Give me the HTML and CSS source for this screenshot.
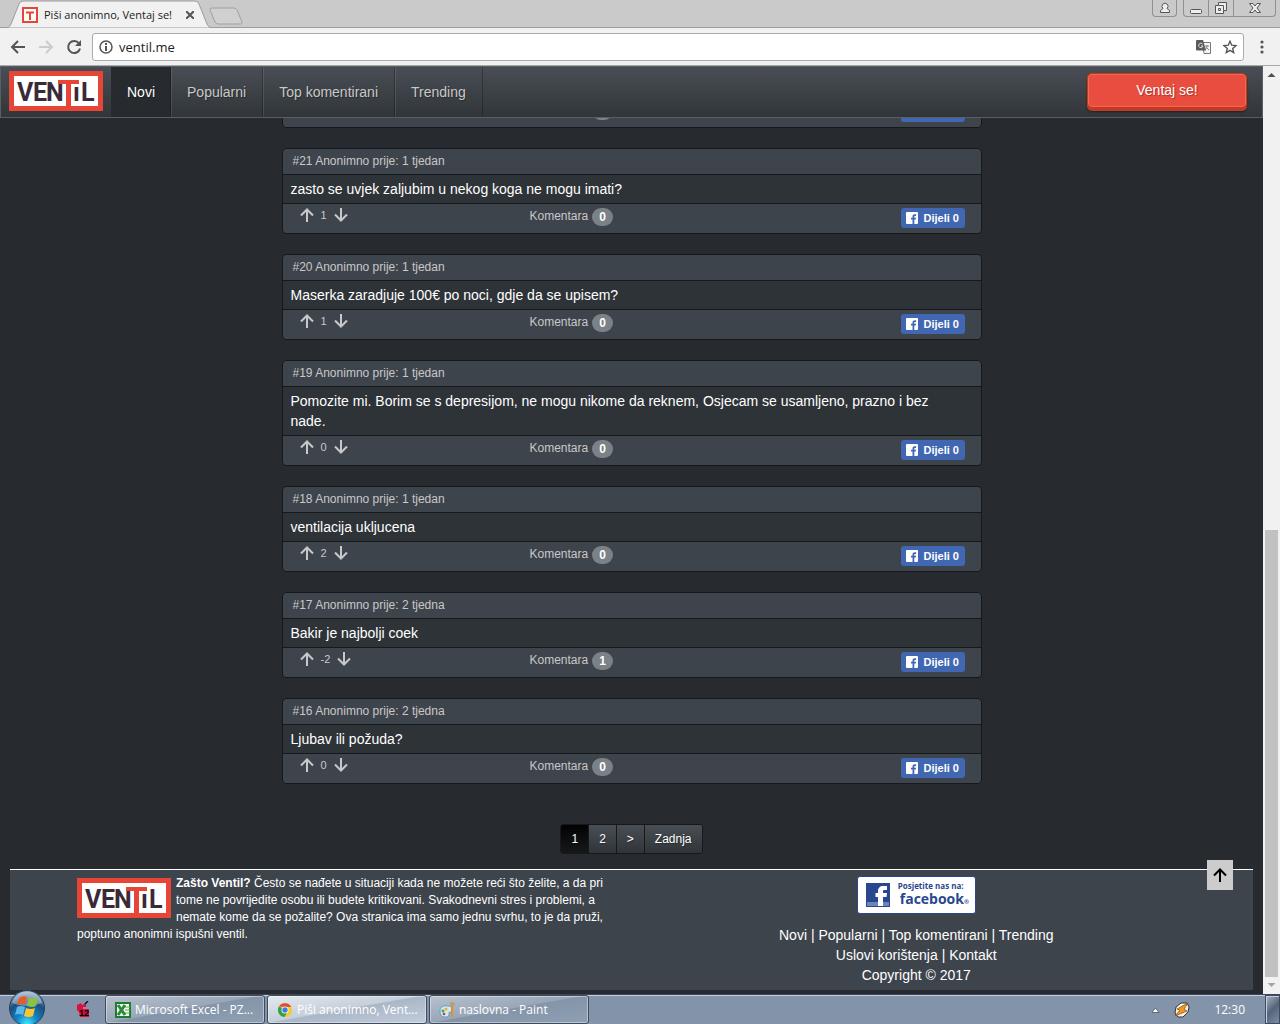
FILE: index.html
```html
<!DOCTYPE html>
<html lang="hr">
<head>
<meta charset="utf-8">
<title>Piši anonimno, Ventaj se!</title>
<link rel="stylesheet" href="styles.css">
</head>
<body>
<svg class="defs" aria-hidden="true">
  <symbol id="logo" viewBox="0 0 94 40">
    <rect width="94" height="40" fill="#e74536"/>
    <rect x="5" y="5" width="84" height="30" fill="#fff"/>
    <g class="logo-text" fill="#3a2a38">
      <text x="8" y="30">V</text><text x="24" y="30">E</text><text x="37" y="30">N</text><text x="64" y="30">ı</text><text x="72" y="30">L</text>
    </g>
    <rect x="49" y="9" width="21" height="4" fill="#e74536"/>
    <rect x="57" y="9" width="5" height="26" fill="#e74536"/>
  </symbol>
  <symbol id="up" viewBox="0 0 14 14"><path d="M7 14V2M1 7.500L7 1.500l6 6" fill="none" stroke="currentColor" stroke-width="2"/></symbol>
  <symbol id="down" viewBox="0 0 14 14"><path d="M7 0v12M1 6.500l6 6 6-6" fill="none" stroke="currentColor" stroke-width="2"/></symbol>
  <symbol id="fb" viewBox="0 0 12 12"><rect width="12" height="12" rx="1" fill="#fff"/><path d="M6.500 12V7.500H5V5.700h1.500V4.500C6.500 3 7.400 2.200 8.800 2.200h1.300v1.700h-.9c-.7 0-.9.300-.9.900v.9H10l-.2 1.800H8.300V12z" fill="#4267b2"/></symbol>
</svg>

<header class="browser">
  <div class="tabstrip">
    <div class="tab">
      <svg class="tab-shape" width="206" height="28" viewBox="0 0 206 28"><path d="M0 28C3 28 4 26 5 24L13 4Q14 1 17 1H189Q192 1 193 4L201 24Q202 27.500 206 28z" fill="#f1f1f1" stroke="#9c9c9c"/></svg>
      <svg width="16" height="16" viewBox="0 0 16 16"><rect x="1" y="1" width="14" height="14" fill="#fff" stroke="#e74536" stroke-width="2"/><path d="M4 5.500h8M8 5v8" stroke="#e74536" stroke-width="2"/></svg>
      <span class="tab-title">Piši anonimno, Ventaj se!</span>
      <svg width="8" height="8" viewBox="0 0 8 8"><path d="M0 0l8 8M8 0L0 8" stroke="#555" stroke-width="2"/></svg>
    </div>
    <svg class="newtab" width="34" height="18" viewBox="0 0 34 18"><path d="M3 1h22q2 0 3 2l5 12q.5 2-1.500 2H9q-2 0-3-2L1 3Q.5 1 3 1z" fill="#d0d0d0" stroke="#a0a0a0"/></svg>
    <div class="winbtns">
      <button class="wb profile" aria-label="Profil"><svg width="12" height="12" viewBox="0 0 12 12"><path d="M1.500 10.500v-2L4 6.500a3 3 0 1 1 4 0l2.500 2v2z" fill="#eee" stroke="#555"/></svg></button>
      <div class="wgroup">
        <button class="wb" aria-label="Minimiziraj"><svg width="12" height="12" viewBox="0 0 12 12"><rect x=".5" y="7.500" width="11" height="4" rx="1" fill="#eee" stroke="#555"/></svg></button>
        <button class="wb" aria-label="Vrati"><svg width="14" height="12" viewBox="0 0 14 12"><path d="M4.500.5h8v8h-3v3h-8v-8h3z" fill="#eee" stroke="#555"/><path d="M4.500 3.500h5v5M4.500 6.500h2v2h-2z" fill="none" stroke="#555"/></svg></button>
        <button class="wb wide" aria-label="Zatvori"><svg width="12" height="10" viewBox="0 0 12 10"><path d="M.5.500H4L6 3 8 .5h3.500L8 5l3.500 4.500H8L6 7 4 9.500H.5L4 5z" fill="#eee" stroke="#555"/></svg></button>
      </div>
    </div>
  </div>
  <div class="toolbar">
    <svg width="16" height="14" viewBox="0 0 16 14"><path d="M15 7H2M8 1L2 7l6 6" fill="none" stroke="#555" stroke-width="2"/></svg>
    <svg width="16" height="14" viewBox="0 0 16 14"><path d="M1 7h13M8 1l6 6-6 6" fill="none" stroke="#ccc" stroke-width="2"/></svg>
    <svg width="16" height="16" viewBox="0 0 16 16"><path d="M13 4.500A6 6 0 1 0 14 9.500" fill="none" stroke="#555" stroke-width="2"/><path d="M15 1v6H9z" fill="#555"/></svg>
    <div class="omnibox">
      <svg width="14" height="14" viewBox="0 0 14 14"><circle cx="7" cy="7" r="6" fill="none" stroke="#555" stroke-width="1.500"/><path d="M7 6v5M7 3v2" stroke="#555" stroke-width="2"/></svg>
      <input type="text" value="ventil.me" aria-label="Adresa">
      <svg width="15" height="14" viewBox="0 0 15 14"><path d="M6 2.500h8.500v11H8z" fill="#f4f4f4" stroke="#777"/><path d="M9 6h4M11 5v1c0 2-1 3-2 4M10 7l3 3" stroke="#888" fill="none"/><path d="M1 0h6l3 10.500H1q-1 0-1-1V1q0-1 1-1z" fill="#5a5a5a"/><path d="M6.500 4A2.200 2.200 0 1 0 7 6H5" fill="none" stroke="#ddd"/></svg>
      <svg width="14" height="14" viewBox="0 0 14 14"><path d="M7 1.200l1.700 4 4.300.4-3.300 2.800 1 4.200L7 10.400l-3.700 2.200 1-4.200L1 5.600l4.300-.4z" fill="none" stroke="#555" stroke-width="1.400"/></svg>
    </div>
    <svg width="4" height="14" viewBox="0 0 4 14"><circle cx="2" cy="2" r="1.600" fill="#555"/><circle cx="2" cy="7" r="1.600" fill="#555"/><circle cx="2" cy="12" r="1.600" fill="#555"/></svg>
  </div>
</header>

<div class="window">
  <div class="page">
    <nav class="navbar">
      <a class="brand" href="#" aria-label="Ventil"><svg width="94" height="40"><use href="#logo"/></svg></a>
      <a class="navlink active" href="#">Novi</a>
      <a class="navlink" href="#">Popularni</a>
      <a class="navlink" href="#">Top komentirani</a>
      <a class="navlink" href="#">Trending</a>
      <button class="vent">Ventaj se!</button>
    </nav>
    <div class="content">
      <main class="feed">
        <article class="card">
          <div class="card-foot"><div class="votes"></div><a class="comments" href="#">Komentara <span class="badge">0</span></a><button class="share"><svg width="12" height="12"><use href="#fb"/></svg>Dijeli 0</button></div>
        </article>
        <article class="card">
          <div class="card-head">#21 Anonimno prije: 1 tjedan</div>
          <p class="card-body">zasto se uvjek zaljubim u nekog koga ne mogu imati?</p>
          <div class="card-foot"><div class="votes"><button aria-label="Gore"><svg width="14" height="14"><use href="#up"/></svg></button><span>1</span><button aria-label="Dolje"><svg width="14" height="14"><use href="#down"/></svg></button></div><a class="comments" href="#">Komentara <span class="badge">0</span></a><button class="share"><svg width="12" height="12"><use href="#fb"/></svg>Dijeli 0</button></div>
        </article>
        <article class="card">
          <div class="card-head">#20 Anonimno prije: 1 tjedan</div>
          <p class="card-body">Maserka zaradjuje 100€ po noci, gdje da se upisem?</p>
          <div class="card-foot"><div class="votes"><button aria-label="Gore"><svg width="14" height="14"><use href="#up"/></svg></button><span>1</span><button aria-label="Dolje"><svg width="14" height="14"><use href="#down"/></svg></button></div><a class="comments" href="#">Komentara <span class="badge">0</span></a><button class="share"><svg width="12" height="12"><use href="#fb"/></svg>Dijeli 0</button></div>
        </article>
        <article class="card">
          <div class="card-head">#19 Anonimno prije: 1 tjedan</div>
          <p class="card-body">Pomozite mi. Borim se s depresijom, ne mogu nikome da reknem, Osjecam se usamljeno, prazno i bez nade.</p>
          <div class="card-foot"><div class="votes"><button aria-label="Gore"><svg width="14" height="14"><use href="#up"/></svg></button><span>0</span><button aria-label="Dolje"><svg width="14" height="14"><use href="#down"/></svg></button></div><a class="comments" href="#">Komentara <span class="badge">0</span></a><button class="share"><svg width="12" height="12"><use href="#fb"/></svg>Dijeli 0</button></div>
        </article>
        <article class="card">
          <div class="card-head">#18 Anonimno prije: 1 tjedan</div>
          <p class="card-body">ventilacija ukljucena</p>
          <div class="card-foot"><div class="votes"><button aria-label="Gore"><svg width="14" height="14"><use href="#up"/></svg></button><span>2</span><button aria-label="Dolje"><svg width="14" height="14"><use href="#down"/></svg></button></div><a class="comments" href="#">Komentara <span class="badge">0</span></a><button class="share"><svg width="12" height="12"><use href="#fb"/></svg>Dijeli 0</button></div>
        </article>
        <article class="card">
          <div class="card-head">#17 Anonimno prije: 2 tjedna</div>
          <p class="card-body">Bakir je najbolji coek</p>
          <div class="card-foot"><div class="votes"><button aria-label="Gore"><svg width="14" height="14"><use href="#up"/></svg></button><span>-2</span><button aria-label="Dolje"><svg width="14" height="14"><use href="#down"/></svg></button></div><a class="comments" href="#">Komentara <span class="badge">1</span></a><button class="share"><svg width="12" height="12"><use href="#fb"/></svg>Dijeli 0</button></div>
        </article>
        <article class="card">
          <div class="card-head">#16 Anonimno prije: 2 tjedna</div>
          <p class="card-body">Ljubav ili požuda?</p>
          <div class="card-foot"><div class="votes"><button aria-label="Gore"><svg width="14" height="14"><use href="#up"/></svg></button><span>0</span><button aria-label="Dolje"><svg width="14" height="14"><use href="#down"/></svg></button></div><a class="comments" href="#">Komentara <span class="badge">0</span></a><button class="share"><svg width="12" height="12"><use href="#fb"/></svg>Dijeli 0</button></div>
        </article>
      </main>
      <nav class="pagination">
        <a class="current" href="#">1</a><a href="#">2</a><a href="#">&gt;</a><a href="#">Zadnja</a>
      </nav>
      <footer class="footer">
        <div class="about">
          <svg class="about-logo" width="94" height="40"><use href="#logo"/></svg>
          <strong>Zašto Ventil?</strong> Često se nađete u situaciji kada ne možete reći što želite, a da pri tome ne povrijedite osobu ili budete kritikovani. Svakodnevni stres i problemi, a nemate kome da se požalite? Ova stranica ima samo jednu svrhu, to je da pruži, poptuno anonimni ispušni ventil.
        </div>
        <div class="links">
          <a class="fb-visit" href="#">
            <svg width="24" height="24" viewBox="0 0 24 24"><rect width="24" height="24" fill="#29478f"/><rect x="1" y="19" width="22" height="4" fill="#6d84b8"/><path d="M12 23v-9H9.500v-4H12V8c0-3 2-5 5-5h4v4h-2.500C17 7 17 7.600 17 8.500V10h4l-.5 4H17v9z" fill="#fff"/></svg>
            <span class="fb-words"><span class="fb-small">Posjetite nas na:</span><span class="fb-big">facebook<small>®</small></span></span>
          </a>
          <div><a href="#">Novi</a> | <a href="#">Popularni</a> | <a href="#">Top komentirani</a> | <a href="#">Trending</a></div>
          <div><a href="#">Uslovi korištenja</a> | <a href="#">Kontakt</a></div>
          <div>Copyright © 2017</div>
        </div>
      </footer>
      <button class="totop" aria-label="Na vrh"><svg width="14" height="14"><use href="#up"/></svg></button>
    </div>
  </div>
  <div class="scrollbar" aria-hidden="true">
    <svg width="17" height="17" viewBox="0 0 17 17"><path d="M4.500 11h8l-4-4z" fill="#505050"/></svg>
    <div class="track"><div class="thumb"></div></div>
    <svg width="17" height="17" viewBox="0 0 17 17"><path d="M4.500 6h8l-4 4z" fill="#a3a3a3"/></svg>
  </div>
</div>

<footer class="taskbar">
  <button class="start" aria-label="Start">
    <svg width="38" height="38" viewBox="0 0 38 38">
      <defs>
        <radialGradient id="orb" cx=".5" cy=".95" r=".9"><stop offset="0" stop-color="#3fe6ff"/><stop offset=".35" stop-color="#1482c4"/><stop offset=".7" stop-color="#1b4f80"/><stop offset="1" stop-color="#8aa4b8"/></radialGradient>
      </defs>
      <circle cx="19" cy="19" r="17.500" fill="url(#orb)" stroke="#20405c"/>
      <path d="M4 14a15.500 15.500 0 0 1 30 0Q19 20 4 14z" fill="#fff" opacity=".35"/>
      <path d="M11 9q4-3 8-1l-2 8q-4-2-8 0z" fill="#ea5a24"/>
      <path d="M21 9q4 2 9-1l-2 9q-5 2-9-.5z" fill="#8cc43f"/>
      <path d="M9 18q4-2 8 0l-2 8q-4-2-8 0z" fill="#5cb6ea"/>
      <path d="M18 19q5 2 9 0l-2 8q-4 2-9 0z" fill="#fcc52c"/>
    </svg>
  </button>
  <svg class="pin" width="15" height="17" viewBox="0 0 15 17"><path d="M1 4l4-2 1 2 4-2v4h-3v2h6v8H4l-1-5-2-2z" fill="#d8103c"/><path d="M9 3l3-3" stroke="#111" stroke-width="1.500"/><text class="pin-text" x="3" y="15">12</text></svg>
  <button class="task"><svg width="16" height="16" viewBox="0 0 16 16"><rect x="1" y="1" width="14" height="14" fill="#f4faf0" stroke="#1f7a34" stroke-width="2"/><path d="M10 5h5M10 8h5M10 11h5" stroke="#62b347"/><path d="M3 3l7 10M10 3L3 13" stroke="#2b8a3c" stroke-width="3"/></svg>Microsoft Excel - PZ...</button>
  <button class="task on"><svg width="16" height="16" viewBox="0 0 16 16"><circle cx="8" cy="8" r="7" fill="#f7c92c"/><path d="M1.900 4.500A7 7 0 0 0 7.500 15L11 9z" fill="#2ba24c"/><path d="M2 4.500A7 7 0 0 1 14.200 5H8z" fill="#df4a39"/><circle cx="8" cy="8" r="3.500" fill="#fff"/><circle cx="8" cy="8" r="2.700" fill="#3f7de0"/></svg>Piši anonimno, Vent...</button>
  <button class="task"><svg width="16" height="16" viewBox="0 0 16 16"><path d="M1 9c0-4 4-6 8-5 4 0 5 3 4 5s-3 0-3 2 0 4-4 4-5-3-5-6z" fill="#cfe8f5" stroke="#5aa0c8"/><circle cx="4" cy="9" r="1.500" fill="#4a4"/><circle cx="7" cy="7" r="1.500" fill="#ea3"/><circle cx="5" cy="12" r="1.300" fill="#d33"/><path d="M13 4v11" stroke="#e58c2b" stroke-width="2"/><path d="M11 0l5 1-2 4h-2z" fill="#c99663"/></svg>naslovna - Paint</button>
  <div class="tray">
    <svg width="9" height="6" viewBox="0 0 9 6"><path d="M1 5.500L4.500 1 8 5.500z" fill="#fff" stroke="#4a5666" stroke-width=".8"/></svg>
    <svg width="16" height="16" viewBox="0 0 16 16"><path d="M2 5l5-4h6l2 4-1 5-5 5H4L1 11z" fill="#f2f2f2" stroke="#333"/><path d="M14 1L3 7l3 1-5 6L13 9l-3-2z" fill="#f69a1c" stroke="#7c4708" stroke-width=".7"/></svg>
    <time class="clock">12:30</time>
  </div>
  <button class="desktop" aria-label="Radna površina"></button>
</footer>
</body>
</html>
```
FILE: styles.css
```css
* { box-sizing: border-box; }
body {
  margin: 0;
  height: 100vh;
  display: flex;
  flex-direction: column;
  overflow: hidden;
  background: #272b30;
  color: #c8c8c8;
  font: 14px/20px "Liberation Sans", Arial, sans-serif;
}
button, input { font: inherit; color: inherit; border: 0; padding: 0; margin: 0; background: none; }
a { color: inherit; text-decoration: none; }
svg { display: block; flex: none; }
.defs { position: absolute; width: 0; height: 0; }
.logo-text { font: bold 25px Roboto, "Liberation Sans", sans-serif; text-shadow: none; }

/* browser frame */
.browser { flex: none; font: 12px/16px "Open Sans", "Noto Sans", sans-serif; color: #222; border-bottom: 1px solid #a9a9a9; }
.tabstrip { height: 28px; display: flex; background: #cacaca; box-shadow: inset 0 -1px #9c9c9c; }
.tab { position: relative; width: 206px; margin-left: 6px; padding: 2px 12px 0 16px; display: flex; align-items: center; gap: 6px; }
.tab > * { position: relative; }
.tab .tab-shape { position: absolute; left: 0; top: 0; }
.tab-title { flex: 1; white-space: nowrap; font-size: 11px; }
.tab > svg:last-child { margin-right: 6px; }
.newtab { margin: 7px 0 0 -3px; }
.winbtns { margin-left: auto; display: flex; gap: 6px; padding-right: 5px; height: 17px; }
.wgroup { display: flex; }
.wb { width: 25px; height: 17px; display: flex; align-items: center; justify-content: center; border: 1px solid #909090; border-top: 0; }
.wb.profile { border-radius: 0 0 4px 4px; }
.wgroup .wb { width: 26px; margin-right: -1px; }
.wgroup .wb:first-child { border-radius: 0 0 0 4px; }
.wgroup .wide { width: 43px; border-radius: 0 0 4px 0; }
.toolbar { height: 37px; display: flex; align-items: center; gap: 12px; padding: 0 16px 0 10px; background: #f1f1f1; }
.omnibox { flex: 1; height: 28px; margin: 0 4px 0 -2px; display: flex; align-items: center; gap: 12px; padding: 0 6px; background: #fff; border: 1px solid #ababab; border-radius: 3px; }
.omnibox input { flex: 1; min-width: 0; margin-left: -6px; font-size: 13px; outline: 0; }

/* page */
.window { flex: 1; min-height: 0; display: flex; }
.page { flex: 1; min-width: 0; display: flex; flex-direction: column; }
.navbar { flex: none; height: 52px; display: flex; border: 1px solid #5a5e62; background: linear-gradient(#484e55, #3a3f44 60%, #313539); text-shadow: 1px 1px 1px rgba(0,0,0,.3); }
.brand { padding: 4px 8px; }
.navlink { padding: 15px; border-left: 1px solid rgba(255,255,255,.1); border-right: 1px solid rgba(0,0,0,.25); }
.navlink + .navlink { padding-right: 16px; }
.navlink.active { background: #272b2f; color: #fff; border-left-color: #272b2f; }
.vent { width: 160px; height: 35px; margin: 6px 15px 0 auto; padding-bottom: 2px; border: 1px solid #c73a10; border-radius: 5px; background: #e94d3f; color: #fff; box-shadow: inset 0 0 0 1px #ee6a55, 0 3px #c0392b, 0 4px 2px rgba(0,0,0,.4); text-shadow: 1px 1px 1px rgba(0,0,0,.3); }

.content { flex: 1; min-height: 0; position: relative; overflow: hidden; display: flex; flex-direction: column; justify-content: flex-end; padding: 0 10px 4px; }
.feed { flex: none; width: 100%; max-width: 700px; margin: 0 auto; display: flex; flex-direction: column; gap: 20px; }
.card { border: 1px solid #16181b; border-radius: 4px; background: #3e444c; overflow: hidden; }
.card-head { height: 26px; padding: 2px 10px; font-size: 12px; border-bottom: 1px solid #16181b; }
.card-body { margin: 0; padding: 4px 24px 4px 8px; background: #2e3338; color: #fff; border-bottom: 1px solid #16181b; }
.card-foot { height: 29px; display: grid; grid-template-columns: 230px 1fr auto; align-items: start; padding: 4px 16px 0 17px; font-size: 12px; line-height: 16px; }
.votes { display: flex; gap: 7px; font-size: 11px; line-height: 14px; }
.comments { display: flex; gap: 4px; }
.badge { min-width: 21px; height: 18px; padding: 0 6px; border-radius: 9px; background: #7a8288; color: #fff; font-weight: bold; line-height: 18px; text-align: center; }
.share { height: 20px; width: 64px; display: flex; align-items: center; gap: 6px; padding-left: 5px; border-radius: 3px; background: #4267b2; color: #fff; font-size: 11px; font-weight: bold; white-space: nowrap; }

.pagination { flex: none; align-self: center; display: flex; margin: 40px 0 15px; border: 1px solid #16181b; border-radius: 3px; overflow: hidden; color: #fff; font-size: 12px; line-height: 18px; text-shadow: 1px 1px 1px rgba(0,0,0,.3); }
.pagination a { padding: 5px 10px; background: linear-gradient(#484e55, #3a3f44 60%, #313539); }
.pagination a + a { border-left: 1px solid #16181b; }
.pagination .current { background: linear-gradient(#020202, #16181a); }

.footer { flex: none; display: grid; grid-template-columns: 1fr 1fr; gap: 30px; padding: 0 67px 5px; border-top: 1px solid #fff; background: #3e444c; color: #fff; }
.about { padding-top: 5px; font-size: 12px; line-height: 17px; }
.about-logo { float: left; margin: 3px 5px 0 0; }
.links { display: flex; flex-direction: column; align-items: center; padding-top: 6px; }
.fb-visit { width: 119px; height: 38px; margin-bottom: 11px; display: flex; align-items: center; gap: 8px; padding-left: 8px; border: 1px solid #29478f; border-radius: 3px; background: #fff; color: #29478f; font-family: "Open Sans", "Noto Sans", sans-serif; font-weight: bold; white-space: nowrap; }
.fb-words { display: flex; flex-direction: column; }
.fb-small { font-size: 8px; line-height: 10px; }
.fb-big { font-size: 14px; line-height: 16px; padding-left: 2px; }
.fb-big small { font-size: 6px; }
.totop { position: absolute; right: 30px; bottom: 104px; width: 26px; height: 30px; display: flex; align-items: center; justify-content: center; background: #ccc; color: #000; }

.scrollbar { flex: none; width: 17px; display: flex; flex-direction: column; background: #f1f1f1; }
.track { flex: 1; display: flex; flex-direction: column; justify-content: flex-end; padding: 0 2px; }
.thumb { height: 50%; background: #c1c1c1; }

/* taskbar */
.taskbar { flex: none; height: 30px; display: flex; align-items: center; gap: 2px; background: #8394aa; border-top: 1px solid #3d4754; box-shadow: inset 0 1px #c3cfde; font: 12px/16px "Open Sans", "Noto Sans", sans-serif; color: #fff; }
.start { width: 38px; height: 38px; margin: -6px 28px 0 8px; position: relative; align-self: flex-start; }
.pin { margin-right: 12px; }
.pin-text { font: bold 9px "Liberation Sans", sans-serif; }
.task { width: 160px; height: 29px; display: flex; align-items: center; gap: 4px; padding: 0 9px; border: 1px solid #3f4b5b; border-radius: 3px; background: linear-gradient(170deg, #b9c2cd, #98a6b8 48%, #8495a9 50%, #8fa0b4); box-shadow: inset 0 0 0 1px rgba(255,255,255,.4); white-space: nowrap; }
.task.on { background: linear-gradient(170deg, #e4e9ee, #c5cfda 48%, #aab7c7 50%, #c2cddb); }
.tray { margin-left: auto; display: flex; align-items: center; gap: 14px; }
.clock { margin: 0 18px 0 10px; }
.desktop { width: 15px; height: 29px; border: 1px solid #3f4b5b; background: linear-gradient(135deg, #a9b4c1, #55657a 50%, #7a8da5); box-shadow: inset 1px 1px #c3cfde; }
```
